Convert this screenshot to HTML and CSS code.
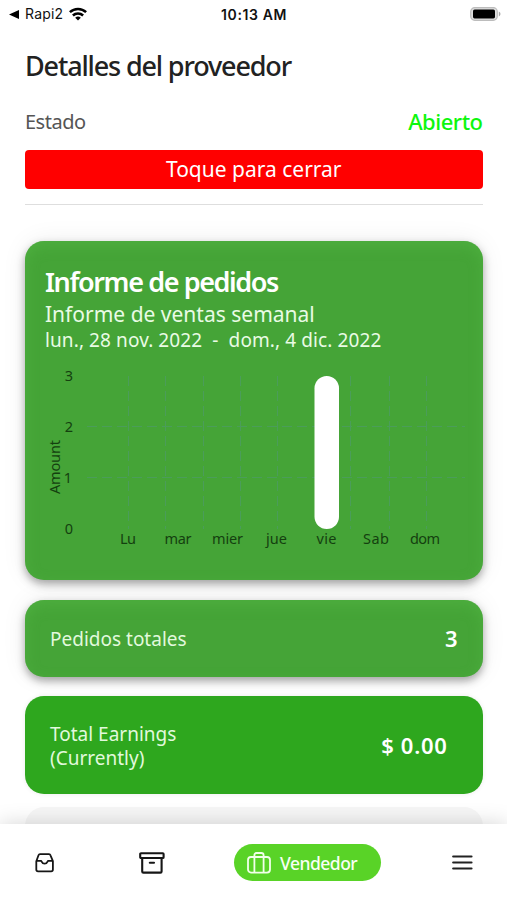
FILE: index.html
```html
<!DOCTYPE html>
<html lang="es">
<head>
    <meta charset="UTF-8">
    <meta name="viewport" content="width=device-width, initial-scale=1.0">
    <title>Detalles del proveedor</title>
    <link rel="stylesheet" href="styles.css">
</head>
<body>
    <!-- Status bar -->
    <header class="status-bar">
        <div class="status-left">
            <svg width="10" height="9" viewBox="0 0 10 9"><path d="M0 4.5 10 0v9z"/></svg>
            <span class="back-app">Rapi2</span>
            <svg class="wifi" width="18" height="14" viewBox="0 0 18 14" fill="none" stroke="#000" stroke-width="2.5">
                <path d="M.9 5.2a11.6 11.6 0 0 1 16.2 0"/>
                <path d="M3.9 8.5a7.3 7.3 0 0 1 10.2 0"/>
                <path d="M9 13.6 6.2 10.8a4 4 0 0 1 5.6 0z" fill="#000" stroke="none"/>
            </svg>
        </div>
        <span class="clock">10:13 AM</span>
        <svg class="battery" width="31" height="14" viewBox="0 0 31 14">
            <rect x=".7" y=".7" width="26.6" height="12.6" rx="4" fill="#dedede" stroke="#bcbcbc" stroke-width="1.2"/>
            <rect x="3" y="2.6" width="22" height="8.8" rx="1.6"/>
            <path d="M28.8 4.6c2.2.8 2.2 4 0 4.8z" fill="#a9a9a9"/>
        </svg>
    </header>

    <main class="content">
        <h1>Detalles del proveedor</h1>
        <div class="status-row">
            <span class="status-label">Estado</span>
            <span class="status-value">Abierto</span>
        </div>
        <button class="close-btn" type="button">Toque para cerrar</button>
        <hr>

        <!-- Weekly report -->
        <section class="card report">
            <h2>Informe de pedidos</h2>
            <p class="subtitle">Informe de ventas semanal</p>
            <p class="dates">lun., 28 nov. 2022 &nbsp;-&nbsp; dom., 4 dic. 2022</p>
            <svg class="chart" width="418" height="190" viewBox="45 360 418 190">
                <g class="grid">
                    <path d="M87 426.5H465M87 477.5H465"/>
                    <path d="M128.5 376V529M165.5 376V529M203.5 376V529M240.5 376V529M277.5 376V529M350.5 376V529M389.5 376V529M426.5 376V529"/>
                </g>
                <rect x="314.5" y="376" width="24.5" height="153" rx="12.25" fill="#fff"/>
                <g class="axis">
                    <text x="69" y="380.8">3</text>
                    <text x="69" y="431.8">2</text>
                    <text x="68" y="482.8">1</text>
                    <text x="69" y="533.8">0</text>
                    <text x="128" y="544" textLength="16">Lu</text>
                    <text x="178" y="544" textLength="27">mar</text>
                    <text x="227.5" y="544" textLength="31">mier</text>
                    <text x="276.5" y="544" textLength="21">jue</text>
                    <text x="326.5" y="544" textLength="20">vie</text>
                    <text x="376" y="544" textLength="26">Sab</text>
                    <text x="425" y="544" textLength="30">dom</text>
                    <text transform="translate(60 467) rotate(-90)" textLength="54">Amount</text>
                </g>
            </svg>
        </section>

        <section class="card total">
            <span class="card-label">Pedidos totales</span>
            <span class="card-value">3</span>
        </section>

        <section class="card earnings">
            <span class="card-label">Total Earnings<br>(Currently)</span>
            <span class="card-value">$ 0.00</span>
        </section>

        <section class="card next"></section>
    </main>

    <!-- Bottom navigation -->
    <nav class="tab-bar">
        <svg class="tab-inbox" width="20" height="20" viewBox="0 0 20 20" fill="none" stroke="#161616" stroke-width="1.8" stroke-linejoin="round">
            <path d="M1.3 8.2 3.5 2.3Q3.9 1.2 5 1.2H14Q15.1 1.2 15.5 2.3L17.9 8.2V16.6Q17.9 18.4 16.1 18.4H3.1Q1.3 18.4 1.3 16.6z"/>
            <path d="M1.3 7.9H6.1C6.8 7.9 6.6 10.6 9.6 10.6S12.4 7.9 13.1 7.9H17.9"/>
        </svg>
        <svg class="tab-archive" width="26" height="22" viewBox="0 0 26 22" fill="none" stroke="#161616" stroke-width="2.1" stroke-linejoin="round">
            <rect x="1.2" y="1.2" width="23.4" height="4.8" rx=".8"/>
            <path d="M3.2 6V19.4Q3.2 20.6 4.4 20.6H21.4Q22.6 20.6 22.6 19.4V6"/>
            <path d="M10.8 10.7H15" stroke-linecap="round"/>
        </svg>
        <a class="tab-active" href="#">
            <svg width="24" height="22" viewBox="0 0 24 22" fill="none" stroke="#f1ffea" stroke-width="1.8">
                <rect x="1" y="5" width="22" height="15.6" rx="3"/>
                <path d="M7.4 20.6V3.2Q7.4 1 9.6 1H14.4Q16.6 1 16.6 3.2V20.6"/>
            </svg>
            <span>Vendedor</span>
        </a>
        <svg class="tab-menu" width="21" height="16" viewBox="0 0 21 16" stroke="#222" stroke-width="2.2" stroke-linecap="round">
            <path d="M1.2 1.5H19.5M1.2 7.5H19.5M1.2 13.5H19.5"/>
        </svg>
    </nav>
</body>
</html>
```
FILE: styles.css
```css
* {
    box-sizing: border-box;
}

body {
    margin: 0;
    height: 900px;
    display: flex;
    flex-direction: column;
    overflow: hidden;
    background: #fff;
    font-family: 'Noto Sans', sans-serif;
    color: #222;
}

/* Status bar */
.status-bar {
    flex: none;
    height: 28px;
    padding: 0 6px 0 9px;
    display: grid;
    grid-template-columns: 1fr auto 1fr;
    align-items: center;
    font-family: Inter, sans-serif;
    color: #111;
}

.status-left {
    display: flex;
    align-items: center;
}

.back-app {
    margin: 0 6px;
    font-size: 14px;
    line-height: 28px;
    letter-spacing: 0.2px;
}

.clock {
    margin-right: 2px;
    font-size: 14px;
    font-weight: 600;
    letter-spacing: 0.6px;
}

.battery {
    justify-self: end;
    margin-top: -1px;
}

/* Provider details */
.content {
    flex: 1;
    min-height: 0;
    overflow: hidden;
    padding: 0 24.5px 0 25px;
}

h1,
h2,
p {
    margin: 0;
    white-space: nowrap;
}

h1 {
    margin-top: 18px;
    font-size: 27px;
    line-height: 39px;
    font-weight: 500;
    letter-spacing: -1.15px;
}

.status-row {
    margin-top: 16px;
    height: 40px;
    display: flex;
    justify-content: space-between;
    align-items: center;
}

.status-label {
    font-size: 20px;
    color: #555;
    letter-spacing: -0.5px;
}

.status-value {
    font-size: 22px;
    font-weight: 500;
    color: #0df60d;
    letter-spacing: -0.5px;
}

.close-btn {
    display: block;
    width: 100%;
    height: 39px;
    margin-top: 9px;
    padding: 0 0 2px;
    border: none;
    border-radius: 4px;
    background: #ff0000;
    color: #fff;
    font-family: inherit;
    font-size: 21px;
}

hr {
    height: 1px;
    margin: 15px 0 0;
    border: none;
    background: #dedede;
}

/* Cards */
.card {
    border-radius: 19px;
    background: #45a437;
    color: #fff;
    box-shadow: 0 4px 9px rgba(0, 0, 0, 0.34), 0 0 26px rgba(0, 0, 0, 0.07), inset 0 5px 14px rgba(90, 190, 75, 0.4);
}

.report {
    height: 339px;
    margin-top: 36px;
    padding: 22px 19px 0 20px;
}

.report h2 {
    font-size: 27px;
    line-height: 38px;
    font-weight: 600;
    letter-spacing: -1.4px;
}

.subtitle {
    font-size: 21px;
    line-height: 26px;
    color: #e9fbe5;
}

.dates {
    font-size: 19px;
    line-height: 26px;
    letter-spacing: 0.1px;
    color: #e9fbe5;
}

.chart {
    display: block;
    margin-top: 7px;
    overflow: visible;
}

.grid {
    fill: none;
    stroke: #4f9a72;
    stroke-width: 1;
    stroke-dasharray: 10 5;
    opacity: 0.6;
}

.axis {
    fill: #14400f;
    font-size: 14.5px;
    text-anchor: middle;
}

.total,
.earnings {
    display: flex;
    justify-content: space-between;
    align-items: center;
    padding: 0 25px;
}

.total {
    height: 77px;
    margin-top: 19.5px;
}

.earnings {
    height: 98px;
    margin-top: 19.5px;
    padding-right: 35px;
    background: #2ea71e;
    box-shadow: 0 0 5px rgba(0, 0, 0, 0.08);
}

.card-label {
    padding-top: 2px;
    font-size: 19px;
    line-height: 24.5px;
    color: #e2f9dd;
}

.card-value {
    font-size: 22px;
    font-weight: 600;
}

.earnings .card-value {
    letter-spacing: 0.7px;
}

.next {
    height: 80px;
    margin-top: 13px;
    background: #f6f6f6;
    box-shadow: none;
}

/* Bottom navigation */
.tab-bar {
    flex: none;
    height: 76px;
    display: flex;
    align-items: center;
    padding: 1px 34px 0 35px;
    background: #fff;
    box-shadow: 0 0 20px rgba(0, 0, 0, 0.17);
    z-index: 1;
}

.tab-archive {
    margin-left: 84px;
}

.tab-active {
    display: flex;
    align-items: center;
    gap: 9px;
    width: 147px;
    height: 37px;
    margin-left: 69px;
    padding-left: 13px;
    border-radius: 19px;
    background: #59d327;
    color: #f8fff4;
    font-size: 17.5px;
    font-weight: 500;
    letter-spacing: -0.5px;
    text-decoration: none;
}

.tab-menu {
    margin-left: auto;
}
```
